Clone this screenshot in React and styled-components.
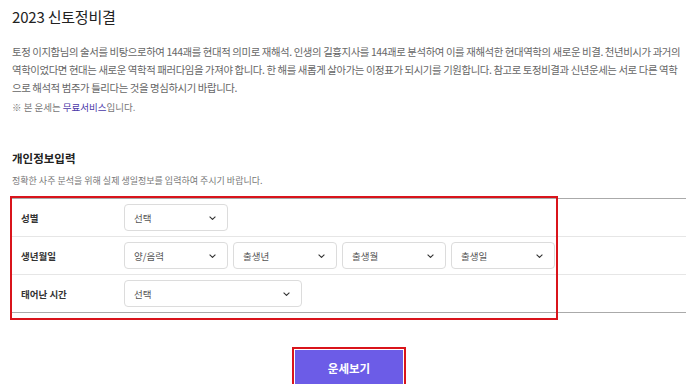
import React from 'react'
import styled, { createGlobalStyle } from 'styled-components'

const GlobalStyle = createGlobalStyle`
  body {
    margin: 0;
    background: #fff;
    font-family: "Noto Sans CJK KR", "Noto Sans", sans-serif;
    color: #333;
  }
`

const Page = styled.div`
  padding: 0 14px 0 12px;
  width: 674px;
`

const Title = styled.h1`
  margin: 7px 0 0;
  font-size: 15px;
  line-height: 20px;
  font-weight: 400;
  color: #222;
  letter-spacing: -0.2px;
`

const Desc = styled.p`
  margin: 16px 0 0;
  font-size: 10.4px;
  line-height: 18px;
  color: #666;
  letter-spacing: -0.39px;
  word-break: break-all;
`

const Note = styled.p`
  margin: 1px 0 0;
  font-size: 9.5px;
  line-height: 18px;
  color: #777;
`

const Free = styled.span`
  color: #4a38a8;
`

const SectionTitle = styled.h2`
  margin: 33px 0 0;
  font-size: 11.5px;
  line-height: 18px;
  font-weight: 700;
  color: #222;
`

const SectionSub = styled.p`
  margin: 6px 0 0;
  font-size: 9px;
  line-height: 16px;
  color: #777;
`

const FormTable = styled.div`
  position: relative;
  margin-top: 9px;
  border-top: 1px solid #aaa;
  border-bottom: 1px solid #aaa;
`

const Highlight = styled.div`
  position: absolute;
  left: -2px;
  top: -3px;
  width: 544px;
  height: 120px;
  border: 2px solid #d9141b;
  pointer-events: none;
`

const Row = styled.div`
  display: flex;
  align-items: center;
  height: ${p => (p.$first ? 37 : 38)}px;
  padding-left: 9px;
  border-top: ${p => (p.$first ? 'none' : '1px solid #e6e6e6')};
  box-sizing: border-box;
`

const Label = styled.div`
  width: 103px;
  font-size: 9.5px;
  font-weight: 700;
  color: #333;
`

const Selects = styled.div`
  display: flex;
  gap: 5px;
`

const Select = styled.div`
  display: flex;
  align-items: center;
  justify-content: space-between;
  box-sizing: border-box;
  width: ${p => p.$w}px;
  height: 27px;
  padding: 0 11px 0 9px;
  border: 1px solid #dcdcdc;
  border-radius: 4px;
  background: #fff;
  font-size: 9.5px;
  color: #555;
`

const ButtonWrap = styled.div`
  display: flex;
  justify-content: center;
  margin-top: 37px;
`

const Button = styled.button`
  width: 108px;
  height: 36px;
  border: none;
  background: #6c5ce7;
  color: #fff;
  font-family: inherit;
  font-size: 11.5px;
  font-weight: 700;
  box-shadow: 0 0 0 1px #fff, 0 0 0 3px #d9141b;
`

function Chevron() {
  return (
    <svg width="7" height="4" viewBox="0 0 7 4">
      <polyline points="0.6,0.6 3.5,3.4 6.4,0.6" fill="none" stroke="#333" strokeWidth="1.1" />
    </svg>
  )
}

function Dropdown({ w, children }) {
  return (
    <Select $w={w}>
      <span>{children}</span>
      <Chevron />
    </Select>
  )
}

export default function App() {
  return (
    <Page>
      <GlobalStyle />
      <Title>2023 신토정비결</Title>
      <Desc>
        토정 이지함님의 술서를 비탕으로하여 144괘를 현대적 의미로 재해석. 인생의 길흉지사를 144괘로 분석하여 이를 재해석한 현대역학의 새로운 비결. 천년비시가 과거의 역학이었다면 현대는 새로운 역학적 패러다임을 가져야 합니다. 한 해를 새롭게 살아가는 이정표가 되시기를 기원합니다. 참고로 토정비결과 신년운세는 서로 다른 역학으로 해석적 범주가 틀리다는 것을 명심하시기 바랍니다.
      </Desc>
      <Note>※ 본 운세는 <Free>무료서비스</Free>입니다.</Note>

      <SectionTitle>개인정보입력</SectionTitle>
      <SectionSub>정확한 사주 분석을 위해 실제 생일정보를 입력하여 주시기 바랍니다.</SectionSub>

      <FormTable>
        <Row $first>
          <Label>성별</Label>
          <Dropdown w={104}>선택</Dropdown>
        </Row>
        <Row>
          <Label>생년월일</Label>
          <Selects>
            <Dropdown w={104}>양/음력</Dropdown>
            <Dropdown w={104}>출생년</Dropdown>
            <Dropdown w={104}>출생월</Dropdown>
            <Dropdown w={104}>출생일</Dropdown>
          </Selects>
        </Row>
        <Row>
          <Label>태어난 시간</Label>
          <Dropdown w={178}>선택</Dropdown>
        </Row>
        <Highlight />
      </FormTable>

      <ButtonWrap>
        <Button>운세보기</Button>
      </ButtonWrap>
    </Page>
  )
}
